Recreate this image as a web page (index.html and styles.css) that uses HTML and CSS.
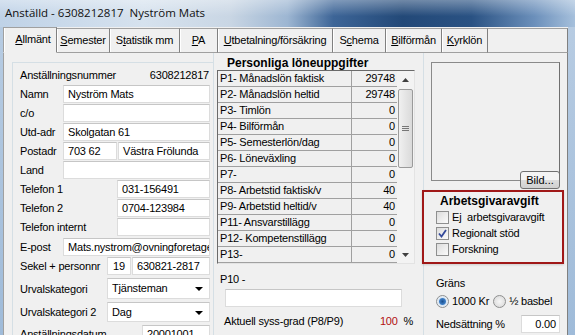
FILE: index.html
```html
<html><head>
<meta charset="UTF-8">
<title>Anställd</title>
<link rel="stylesheet" href="styles.css">
</head>
<body>
<div class="window">
    <div class="titlebar">Anställd - 6308212817&nbsp; Nyström Mats</div>

    <div class="client">
        <div class="tabs">
            <div class="tab active w54"><u>A</u>llmänt</div>
            <div class="tab w53"><u>S</u>emester</div>
            <div class="tab w70">S<u>t</u>atistik mm</div>
            <div class="tab w38"><u>P</u>A</div>
            <div class="tab w115"><u>U</u>tbetalning/försäkring</div>
            <div class="tab w53">S<u>c</u>hema</div>
            <div class="tab w56"><u>B</u>ilförmån</div>
            <div class="tab w46"><u>K</u>yrklön</div>
            <div class="tab-rest"></div>
        </div>

        <div class="panel">
            <!-- left: person data -->
            <div class="col-left">
                <div class="group">
                    <div class="row num"><span>Anställningsnummer</span><span>6308212817</span></div>
                    <div class="row"><span class="lbl">Namn</span><div class="field">Nyström Mats</div></div>
                    <div class="row"><span class="lbl">c/o</span><div class="field"></div></div>
                    <div class="row"><span class="lbl">Utd-adr</span><div class="field">Skolgatan 61</div></div>
                    <div class="row"><span class="lbl">Postadr</span><div class="field zip">703 62</div><div class="field">Västra Frölunda</div></div>
                    <div class="row"><span class="lbl">Land</span><div class="field"></div></div>
                    <div class="row"><span class="lbl tel">Telefon 1</span><div class="field">031-156491</div></div>
                    <div class="row"><span class="lbl tel">Telefon 2</span><div class="field">0704-123984</div></div>
                    <div class="row"><span class="lbl tel">Telefon internt</span><div class="field"></div></div>
                    <div class="row gap2"><span class="lbl">E-post</span><div class="field clip">Mats.nystrom@ovningforetaget.se</div></div>
                    <div class="row"><span class="lbl sek">Sekel + personnr</span><div class="field cent">19</div><div class="field">630821-2817</div></div>
                    <div class="row gap3 tall"><span class="lbl sek">Urvalskategori</span><div class="field select">Tjänsteman<span class="arrow"></span></div></div>
                    <div class="row gap3 tall2"><span class="lbl sek">Urvalskategori 2</span><div class="field select">Dag<span class="arrow"></span></div></div>
                    <div class="row gap3"><span class="lbl date">Anställningsdatum</span><div class="field">20001001</div></div>
                </div>
            </div>

            <!-- middle: salary table -->
            <div class="col-mid">
                <div class="heading">Personliga löneuppgifter</div>
                <div class="table">
                    <div class="rows">
                        <div class="trow"><span>P1- Månadslön faktisk</span><span>29748</span></div>
                        <div class="trow"><span>P2- Månadslön heltid</span><span>29748</span></div>
                        <div class="trow"><span>P3- Timlön</span><span>0</span></div>
                        <div class="trow"><span>P4- Bilförmån</span><span>0</span></div>
                        <div class="trow"><span>P5- Semesterlön/dag</span><span>0</span></div>
                        <div class="trow"><span>P6- Löneväxling</span><span>0</span></div>
                        <div class="trow"><span>P7-</span><span>0</span></div>
                        <div class="trow"><span>P8- Arbetstid faktisk/v</span><span>40</span></div>
                        <div class="trow"><span>P9- Arbetstid heltid/v</span><span>40</span></div>
                        <div class="trow"><span>P11- Ansvarstillägg</span><span>0</span></div>
                        <div class="trow"><span>P12- Kompetenstillägg</span><span>0</span></div>
                        <div class="trow"><span>P13-</span><span>0</span></div>
                    </div>
                    <div class="scrollbar">
                        <div class="sb-btn"><svg width="7" height="4" viewBox="0 0 7 4"><path d="M0 4 L3.5 0 L7 4 Z" fill="#404040"/></svg></div>
                        <div class="sb-thumb"><span class="grip"></span></div>
                        <div class="sb-track"></div>
                        <div class="sb-btn"><svg width="7" height="4" viewBox="0 0 7 4"><path d="M0 0 L3.5 4 L7 0 Z" fill="#404040"/></svg></div>
                    </div>
                </div>
                <div class="p10">P10 -</div>
                <div class="field wide"></div>
                <div class="syss"><span>Aktuell syss-grad (P8/P9)</span><span class="pct"><b>100</b>&nbsp; %</span></div>
            </div>

            <!-- right: picture and fee options -->
            <div class="col-right">
                <div class="picture">
                    <button class="bild">Bild...</button>
                </div>
                <div class="fee">
                    <div class="fee-title">Arbetsgivaravgift</div>
                    <div class="check"><span class="box"></span>Ej&nbsp; arbetsgivaravgift</div>
                    <div class="check"><span class="box checked"><svg width="9" height="9" viewBox="0 0 9 9"><path d="M1 4.5 L3.5 7.5 L8 1" stroke="#33499a" stroke-width="1.8" fill="none"/></svg></span>Regionalt stöd</div>
                    <div class="check"><span class="box"></span>Forskning</div>
                </div>
                <div class="grans">Gräns</div>
                <div class="radios">
                    <span class="radio on"></span><span class="rlabel">1000 Kr</span>
                    <span class="radio"></span><span>½ basbel</span>
                </div>
                <div class="neds"><span>Nedsättning %</span><div class="field small">0.00</div></div>
            </div>
        </div>
    </div>
</div>
</body></html>
```

FILE: styles.css
```css
body {
    margin: 0;
    font-family: "Liberation Sans", Arial, sans-serif;
    font-size: 11px;
    letter-spacing: -0.2px;
    color: #000;
}

.window {
    width: 575px;
    height: 335px;
    overflow: hidden;
    background: linear-gradient(to bottom, #b9cde3, #9fbbd9);
}

.titlebar {
    height: 27px;
    line-height: 25px;
    padding-left: 5px;
    font-family: "Open Sans", sans-serif;
    font-size: 11.5px;
    letter-spacing: 0;
    color: #111;
    background:
        linear-gradient(to bottom, rgba(255,255,255,0.35), rgba(255,255,255,0) 60%),
        linear-gradient(to right, #bfd2e7 0%, #d6e2ee 25%, #c9d6e4 40%, #9db6d2 50%, #3d6597 58%, #234978 70%, #2a5283 82%, #6c90bb 93%, #a6c0dc 100%);
}

.client {
    margin-left: 3px;
    width: 565px;
    height: 308px;
    background: #f0f0f0;
}

/* tab strip */
.tabs {
    display: flex;
    height: 25px;
    padding-top: 1px;
}

.tab {
    box-sizing: border-box;
    text-align: center;
    line-height: 23px;
    border-top: 1px solid #a0a0a0;
    border-right: 1px solid #808080;
    border-bottom: 1px solid #a0a0a0;
    box-shadow: inset 1px 0 #fff;
    white-space: nowrap;
}

.tab.active {
    padding-left: 6px;
    border-left: 1px solid #a0a0a0;
    border-bottom-color: transparent;
    margin-top: -1px;
}

.w54 { width: 54px; }
.w53 { width: 53px; }
.w70 { width: 70px; }
.w38 { width: 38px; }
.w115 { width: 115px; }
.w56 { width: 56px; }
.w46 { width: 46px; }

.tab-rest {
    flex: 1;
    border-top: 1px solid #a0a0a0;
    border-right: 1px solid #808080;
    border-bottom: 1px solid #a0a0a0;
}

.panel {
    display: flex;
    height: 282px;
    border-left: 1px solid #a0a0a0;
    border-right: 1px solid #808080;
}

/* left column */
.col-left {
    width: 201px;
    padding: 9px 0 0 8px;
}

.group {
    height: 300px;
    border-top: 1px solid #d5dfe5;
    border-left: 1px solid #d5dfe5;
    padding: 3px 3px 0 7px;
}

.row {
    display: flex;
    align-items: center;
    height: 18px;
    margin-bottom: 1px;
}

.row.num {
    justify-content: space-between;
    padding-right: 1px;
}

.row.gap2 { margin-top: 2px; }
.row.gap3 { margin-top: 3px; }
.row.tall { height: 21px; }
.row.tall2 { height: 20px; }

.lbl {
    width: 43px;
    flex: none;
    white-space: nowrap;
}

.lbl.tel { width: 97px; }
.lbl.sek { width: 87px; }
.lbl.date { width: 122px; }

.field {
    flex: 1;
    height: 18px;
    box-sizing: border-box;
    line-height: 16px;
    padding-left: 4px;
    background: #fff;
    border: 1px solid #dcdcdc;
    border-top-color: #c6c6c6;
    white-space: nowrap;
    overflow: hidden;
}

.row .field + .field { margin-left: 1px; }
.field.zip { flex: none; width: 54px; }
.field.cent { flex: none; width: 24px; text-align: center; padding-left: 0; }
.field.clip { text-overflow: clip; }

.field.select {
    height: 100%;
    line-height: 19px;
    position: relative;
}

.arrow {
    position: absolute;
    right: 6px;
    top: 8px;
    border-left: 4px solid transparent;
    border-right: 4px solid transparent;
    border-top: 4px solid #000;
}

/* middle column */
.col-mid {
    width: 206px;
    border-left: 1px solid #d5dfe5;
    padding-left: 3px;
}

.heading {
    font-weight: bold;
    font-size: 12px;
    letter-spacing: 0;
    line-height: 16px;
    padding: 2px 0 0 10px;
    height: 15px;
}

.table {
    display: flex;
    width: 198px;
    height: 194px;
    box-sizing: border-box;
    border: 1px solid #6a6a6a;
    border-right-color: #e3e3e3;
    border-bottom-color: #e3e3e3;
}

.rows {
    flex: 1;
}

.trow {
    display: flex;
    height: 16px;
    box-sizing: border-box;
    border-bottom: 1px solid #a0a0a0;
    line-height: 15px;
}

.trow span:first-child {
    width: 131px;
    padding-left: 2px;
    border-right: 1px solid #a0a0a0;
    white-space: nowrap;
    overflow: hidden;
}

.trow span:last-child {
    flex: 1;
    text-align: right;
    padding-right: 2px;
}

.scrollbar {
    width: 17px;
    display: flex;
    flex-direction: column;
    background: #f3f3f3;
}

.sb-btn {
    height: 17px;
    display: flex;
    justify-content: center;
    align-items: center;
}

.sb-thumb {
    height: 77px;
    margin: 1px 1px 0;
    border: 1px solid #9a9a9a;
    border-radius: 2px;
    background: linear-gradient(to right, #f0f0f0, #dadada);
    display: flex;
    justify-content: center;
    align-items: center;
}

.grip {
    width: 7px;
    height: 5px;
    border-top: 1px solid #777;
    border-bottom: 1px solid #777;
    box-sizing: border-box;
    background: linear-gradient(#777, #777) center / 7px 1px no-repeat;
}

.sb-track {
    flex: 1;
}

.p10 {
    margin-top: 8px;
    padding-left: 3px;
    line-height: 14px;
}

.field.wide {
    width: 177px;
    margin: 3px 0 0 8px;
}

.syss {
    display: flex;
    justify-content: space-between;
    width: 189px;
    margin: 7px 0 0 7px;
    line-height: 14px;
}

.pct b {
    font-weight: normal;
    color: #b01010;
}

/* right column */
.col-right {
    flex: 1;
    border-left: 1px solid #d5dfe5;
}

.picture {
    position: relative;
    width: 129px;
    height: 119px;
    box-sizing: border-box;
    margin: 9px 0 0 7px;
    border: 1px solid #8a8a8a;
    border-right-color: #6f6f6f;
}

.bild {
    position: absolute;
    right: -1px;
    bottom: -9px;
    width: 40px;
    height: 18px;
    padding: 0;
    font-family: "Liberation Sans", Arial, sans-serif;
    font-size: 11px;
    border: 1px solid #707070;
    border-radius: 3px;
    background: linear-gradient(to bottom, #f4f4f4 50%, #dcdcdc 50%, #d0d0d0);
}

.fee {
    width: 142px;
    height: 74px;
    box-sizing: border-box;
    margin: 9px 0 0 -2px;
    border: 2px solid #a01818;
    padding: 1px 0 0 12px;
    box-shadow: 0 1px 2px rgba(0,0,0,0.15);
}

.fee-title {
    font-weight: bold;
    font-size: 12px;
    letter-spacing: 0;
    line-height: 16px;
    padding-left: 4px;
}

.check {
    display: flex;
    align-items: center;
    height: 16px;
}

.box {
    width: 11px;
    height: 11px;
    margin-right: 3px;
    border: 1px solid #8e8f8f;
    background: linear-gradient(135deg, #dcdcdc, #fbfbfb);
    display: flex;
    justify-content: center;
    align-items: center;
}

.grans {
    margin: 12px 0 0 12px;
    line-height: 14px;
}

.radios {
    display: flex;
    align-items: center;
    margin: 3px 0 0 12px;
    height: 16px;
}

.radio {
    width: 11px;
    height: 11px;
    border: 1px solid #8e8f8f;
    border-radius: 50%;
    margin-right: 3px;
    background: radial-gradient(circle, #f6f6f6, #d6d6d6);
}

.radio.on {
    background: radial-gradient(circle, #1a4f8e 0, #3f7fc6 3px, #d9e6f3 4px, #eef3f8 6px);
}

.rlabel {
    margin-right: 4px;
}

.neds {
    display: flex;
    align-items: center;
    margin: 5px 0 0 12px;
    height: 19px;
}

.field.small {
    flex: none;
    width: 39px;
    margin-left: 16px;
    text-align: right;
    padding: 0 3px 0 0;
}
```
